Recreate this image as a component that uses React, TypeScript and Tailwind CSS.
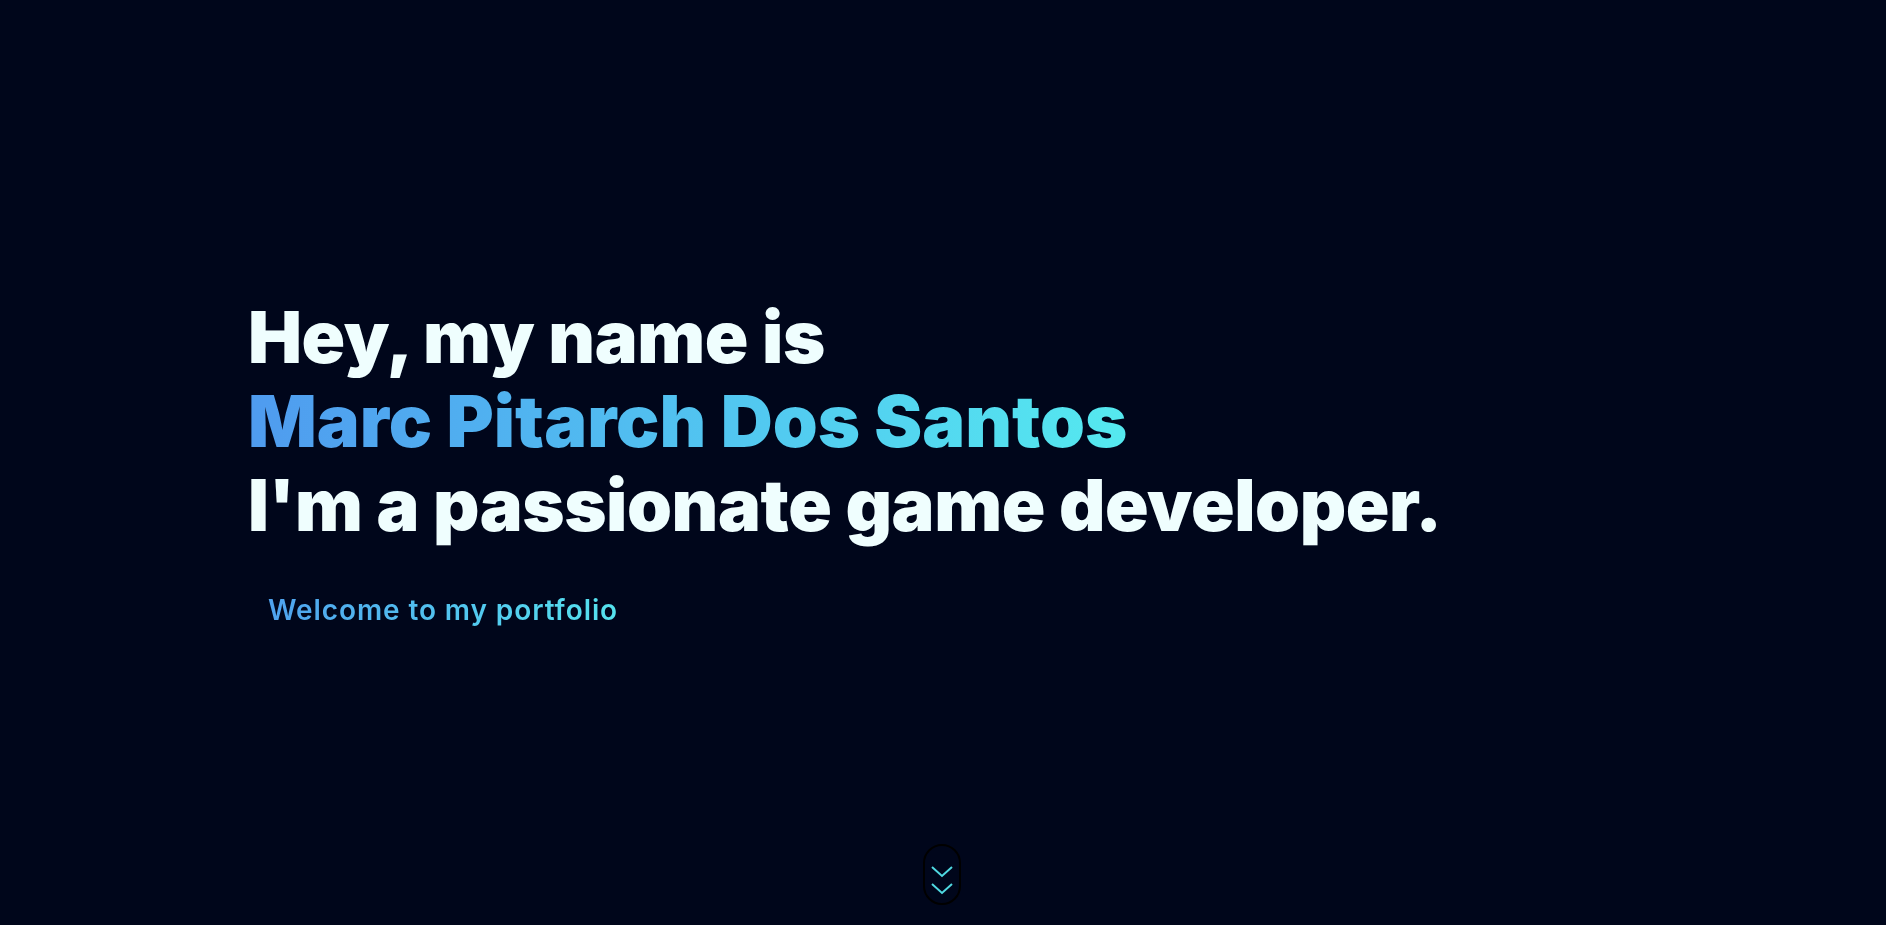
export default function App() {
  return (
    <div className="min-h-screen w-full bg-[#00061b] overflow-hidden" style={{ fontFamily: 'Inter, "Noto Sans", sans-serif' }}>
      <section className="relative h-[925px] flex flex-col justify-center pl-[248px]">
        <h1 className="text-[72px] leading-[84px] font-black text-[#effefe] tracking-[-0.4px]">
          <div>Hey, my name is</div>
          <div className="bg-gradient-to-r from-[#4f9bef] to-[#55e9ef] bg-clip-text text-transparent w-fit tracking-[0px]">Marc Pitarch Dos Santos</div>
          <div>I'm a passionate game developer.</div>
        </h1>
        <p className="mt-[42px] ml-[20px] text-[28px] font-semibold tracking-[0.9px] w-fit bg-gradient-to-r from-[#4fa2ee] to-[#55e3ee] bg-clip-text text-transparent">
          Welcome to my portfolio
        </p>
        <a className="absolute left-[923px] top-[844px] w-[38px] h-[61px] rounded-full border-2 border-black flex flex-col items-center pt-[20px]">
          <svg width="22" height="29" viewBox="0 0 22 29" fill="none" stroke="#4fd9e1" strokeWidth="2">
            <path d="M1 1l10 9 10-9" />
            <path d="M1 18l10 9 10-9" />
          </svg>
        </a>
      </section>
    </div>
  )
}
